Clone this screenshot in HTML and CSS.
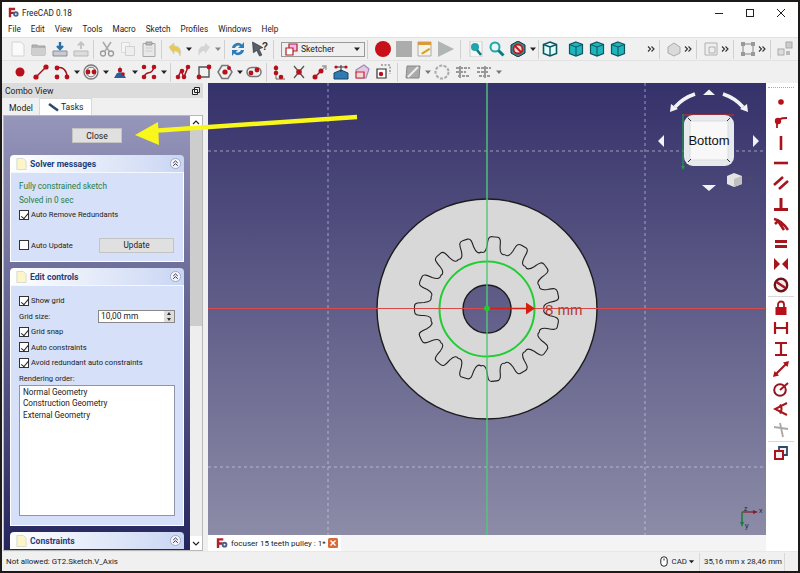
FILE: index.html
```html
<!DOCTYPE html>
<html lang="en">
<head>
  <meta charset="UTF-8">
  <title>FreeCAD 0.18</title>
  <link rel="stylesheet" href="styles.css">
</head>
<body>
  <svg class="defs" width="0" height="0">
    <defs>
      <symbol id="cube" viewBox="0 0 16 16"><path d="M8 1l6.500 2.500v9L8 15l-6.500-2.500v-9z" fill="#1fb5bd" stroke="#0e5560" stroke-width="1.200"/><path d="M1.500 3.500L8 6l6.500-2.500M8 6v9" fill="none" stroke="#0e5560"/></symbol>
      <symbol id="caret" viewBox="0 0 8 8"><path d="M1 2.500h6L4 6z" fill="#222"/></symbol>
      <symbol id="dbl" viewBox="0 0 8 8"><path d="M1 1.500L3.500 4 1 6.500M4.500 1.500L7 4 4.500 6.500" fill="none" stroke="#333" stroke-width="1.100"/></symbol>
      <symbol id="doc" viewBox="0 0 12 12"><path d="M1 0h7l3 3v9H1z" fill="#fdf6c8" stroke="#d8d8d0"/></symbol>
      <symbol id="fold" viewBox="0 0 12 12"><circle cx="6" cy="6" r="5.500" fill="#f4f6fc" stroke="#9aa6c4"/><path d="M3.500 5.500L6 3.200l2.500 2.300M3.500 8.500L6 6.200l2.500 2.300" fill="none" stroke="#223" stroke-width="1"/></symbol>
    </defs>
  </svg>

  <div class="window">
    <div class="titlebar">
      <svg class="app-icon" width="11" height="11" viewBox="0 0 14 14"><path d="M1 1h8v3H4v2h4v3H4v4H1z" fill="#b02028"/><circle cx="10" cy="9" r="3.500" fill="#4a5f8c"/><circle cx="10" cy="9" r="1.200" fill="#fff"/></svg>
      <span class="title">FreeCAD 0.18</span>
      <div class="win-btns">
        <svg width="10" height="10" viewBox="0 0 10 10"><path d="M1 5.500h8" stroke="#222"/></svg>
        <svg width="10" height="10" viewBox="0 0 10 10"><rect x="1.500" y="1.500" width="7" height="7" fill="none" stroke="#222"/></svg>
        <svg width="10" height="10" viewBox="0 0 10 10"><path d="M1 1l8 8M9 1l-8 8" stroke="#222"/></svg>
      </div>
    </div>

    <div class="menubar">
      <span>File</span><span>Edit</span><span>View</span><span>Tools</span><span>Macro</span><span>Sketch</span><span>Profiles</span><span>Windows</span><span>Help</span>
    </div>

    <div class="toolbar tb-main">
      <svg class="ic" viewBox="0 0 16 16"><path d="M2 1h9l3 3v11H2z" fill="#fafafa" stroke="#d4d4d4"/></svg>
      <svg class="ic" viewBox="0 0 16 16"><path d="M1 4h5l1 1h7v9H1z" fill="#b4b4b4" stroke="#a0a0a0"/><path d="M1 7h13v7H1z" fill="#cfcfcf"/></svg>
      <svg class="ic" viewBox="0 0 16 16"><path d="M1 10h14v5H1z" fill="#c8ccd2" stroke="#8a8f96"/><path d="M8 1v6M5 5l3 3 3-3" fill="none" stroke="#2a6fa8" stroke-width="2.400"/></svg>
      <svg class="ic" viewBox="0 0 16 16"><path d="M1 10h14v5H1z" fill="#dcdcdc" stroke="#b8b8b8"/><path d="M8 8V2M5 4.500L8 1.500l3 3" fill="none" stroke="#c4c4c4" stroke-width="2"/></svg>
      <i class="sep"></i>
      <svg class="ic" viewBox="0 0 16 16"><path d="M4 1l6 9M12 1L6 10" stroke="#a8a8a8" stroke-width="1.500"/><circle cx="4" cy="12.500" r="2.500" fill="none" stroke="#9a9a9a" stroke-width="1.300"/><circle cx="12" cy="12.500" r="2.500" fill="none" stroke="#9a9a9a" stroke-width="1.300"/></svg>
      <svg class="ic" viewBox="0 0 16 16"><path d="M1.500 1.500h8v10h-8z" fill="#f4f4f4" stroke="#dadada"/><path d="M5.500 5.500h9v9h-9z" fill="#eee" stroke="#d0d0d0"/></svg>
      <svg class="ic" viewBox="0 0 16 16"><path d="M2 2.500h12v13H2z" fill="#e8e8e8" stroke="#a8a8a8"/><path d="M5 1h6v3H5z" fill="#bbb" stroke="#999"/><path d="M4.500 7h7M4.500 10h7" stroke="#ccc"/></svg>
      <i class="sep"></i>
      <svg class="ic" viewBox="0 0 16 16"><path d="M2 6l5-4v3c5 0 8 3 6 10-1-4-3-5-6-5v3z" fill="#e9c94e" stroke="#c8c8c8" stroke-width=".6"/></svg>
      <svg class="arr" viewBox="0 0 8 8"><use href="#caret"/></svg>
      <svg class="ic" viewBox="0 0 16 16"><path d="M14 6L9 2v3C4 5 1 8 3 15c1-4 3-5 6-5v3z" fill="#d4d4d4"/></svg>
      <svg class="arr" viewBox="0 0 8 8"><path d="M1 2.500h6L4 6z" fill="#888"/></svg>
      <i class="sep"></i>
      <svg class="ic" viewBox="0 0 16 16"><path d="M2 7a6 6 0 0 1 10-3.500L14 1v6H8l2.200-2A3.500 3.500 0 0 0 5 7z" fill="#2d7db8"/><path d="M14 9a6 6 0 0 1-10 3.500L2 15V9h6l-2.200 2A3.500 3.500 0 0 0 11 9z" fill="#2d7db8"/></svg>
      <svg class="ic ic-help" viewBox="0 0 18 17"><path d="M1 1l11 6-4 1.500L11 15l-2.500 1-3-6L2 12.500z" fill="#56606a" stroke="#222" stroke-width=".6"/><text x="11" y="10" class="help-mark">?</text></svg>
      <i class="sep"></i>
      <div class="wb-combo">
        <svg width="13" height="13" viewBox="0 0 13 13"><path d="M4 1h8v7H4z" fill="#fbe" stroke="#b02028" stroke-width="1.200"/><path d="M1 5h7v7H1z" fill="#fff" stroke="#b02028" stroke-width="1.200"/></svg>
        <span>Sketcher</span>
        <svg class="wb-caret" width="8" height="8" viewBox="0 0 8 8"><use href="#caret"/></svg>
      </div>
      <i class="sep"></i>
      <svg class="ic ic-rec" viewBox="0 0 16 16"><circle cx="8" cy="8" r="8" fill="#c8101a"/></svg>
      <svg class="ic" viewBox="0 0 16 16"><rect width="16" height="16" fill="#acacac"/></svg>
      <svg class="ic" viewBox="0 0 16 16"><path d="M1 1h13v14H1z" fill="#f6f4e8" stroke="#aaa"/><path d="M1 1h13v3H1z" fill="#d89a3a"/><path d="M4 12l8-5 1.500 1.500-8 5z" fill="#d8a020"/></svg>
      <svg class="ic" viewBox="0 0 16 16"><path d="M0 0l16 8-16 8z" fill="#b0b6b6"/></svg>
      <i class="sep sep-wide"></i>
      <svg class="ic" viewBox="0 0 16 16"><path d="M2 0h12v16H2z" fill="#f6f6f6" stroke="#ccc"/><circle cx="7" cy="6" r="4" fill="#1fa5ad"/><path d="M9 9l4 5" stroke="#0e7a80" stroke-width="2.500"/></svg>
      <svg class="ic" viewBox="0 0 16 16"><circle cx="6" cy="6" r="4.500" fill="#e8f8f8" stroke="#1fa5ad" stroke-width="2"/><path d="M9.500 9.500l5 5" stroke="#0e7a80" stroke-width="3"/></svg>
      <svg class="ic" viewBox="0 0 16 16"><path d="M8 0l7 4v8l-7 4-7-4V4z" fill="#3a8a92" stroke="#134"/><circle cx="8" cy="8" r="4.500" fill="#ddd" stroke="#c01818" stroke-width="1.800"/><path d="M5 5l6 6" stroke="#c01818" stroke-width="1.800"/></svg>
      <svg class="arr" viewBox="0 0 8 8"><use href="#caret"/></svg>
      <i class="sep sep-tight"></i>
      <svg class="ic" viewBox="0 0 16 16"><path d="M8 1l6.500 2.500v9L8 15l-6.500-2.500v-9z" fill="#dff" stroke="#0e5560" stroke-width="1.600"/><path d="M1.500 3.500L8 6l6.500-2.500M8 6v9" fill="none" stroke="#0e5560" stroke-width="1.400"/></svg>
      <svg class="ic ic-gap" viewBox="0 0 16 16"><use href="#cube"/></svg>
      <svg class="ic" viewBox="0 0 16 16"><use href="#cube"/></svg>
      <svg class="ic" viewBox="0 0 16 16"><use href="#cube"/></svg>
      <svg class="more more-first" viewBox="0 0 8 8"><use href="#dbl"/></svg>
      <i class="sep sep-tool"></i>
      <svg class="ic" viewBox="0 0 16 16"><path d="M2 6l6-4 6 4v6l-6 3-6-3z" fill="#dadada" stroke="#aaa"/></svg>
      <svg class="more" viewBox="0 0 8 8"><use href="#dbl"/></svg>
      <i class="sep sep-tool"></i>
      <svg class="ic" viewBox="0 0 16 16"><path d="M2 2h12v12H2z" fill="#eee" stroke="#b0b0b0"/><path d="M6 6h6v6H6z" fill="none" stroke="#b0b0b0"/></svg>
      <svg class="more" viewBox="0 0 8 8"><use href="#dbl"/></svg>
      <i class="sep sep-tool"></i>
      <svg class="ic" viewBox="0 0 16 16"><path d="M3 3h10v10H3z" fill="none" stroke="#bbb" stroke-width="2"/><rect x="1" y="1" width="4" height="4" fill="#999"/><rect x="11" y="1" width="4" height="4" fill="#999"/><rect x="1" y="11" width="4" height="4" fill="#999"/><rect x="11" y="11" width="4" height="4" fill="#999"/></svg>
      <svg class="more" viewBox="0 0 8 8"><use href="#dbl"/></svg>
      <i class="sep sep-tool"></i>
      <svg class="ic" viewBox="0 0 16 16"><rect x="9" y="1" width="6" height="6" fill="#ccc" stroke="#aaa"/><rect x="1" y="8" width="6" height="6" fill="#ddd" stroke="#aaa"/><rect x="9" y="10" width="4" height="4" fill="#bbb"/></svg>
    </div>

    <div class="toolbar tb-sketch">
      <svg class="ic ic-point" viewBox="0 0 16 16"><circle class="dot" cx="8" cy="8" r="4.500"/></svg>
      <svg class="ic" viewBox="0 0 16 16"><path class="ln" d="M3 13L13 3"/><circle class="dot" cx="3" cy="13" r="2.600"/><circle class="dot" cx="13" cy="3" r="2.600"/></svg>
      <svg class="ic" viewBox="0 0 16 16"><path class="ln" d="M3 4c6-2 10 3 10 9"/><circle class="dot" cx="3" cy="4" r="2.400"/><circle class="dot" cx="3" cy="13" r="2.400"/><circle class="dot" cx="13" cy="13" r="2.400"/></svg>
      <svg class="arr" viewBox="0 0 8 8"><use href="#caret"/></svg>
      <svg class="ic" viewBox="0 0 16 16"><circle cx="8" cy="8" r="7" fill="none" stroke="#777" stroke-width="1.300"/><circle cx="8" cy="8" r="4.800" fill="none" stroke="#777"/><circle class="dot" cx="5" cy="8" r="2.400"/><circle class="dot" cx="11" cy="8" r="2.400"/></svg>
      <svg class="arr" viewBox="0 0 8 8"><use href="#caret"/></svg>
      <svg class="ic" viewBox="0 0 16 16"><path d="M2 14h12l-3-5H5z" fill="#2a5f9c"/><path d="M6 9l2-7 2 7z" fill="#6a88b0"/><circle class="dot" cx="8" cy="6" r="2.200"/><circle class="dot" cx="11" cy="10" r="1.800"/></svg>
      <svg class="arr" viewBox="0 0 8 8"><use href="#caret"/></svg>
      <svg class="ic" viewBox="0 0 16 16"><path class="ln" d="M3 13c3-8 7 0 10-10"/><circle class="dot" cx="3" cy="3" r="2.300"/><circle class="dot" cx="13" cy="3" r="2.300"/><circle class="dot" cx="3" cy="13" r="2.300"/><circle class="dot" cx="13" cy="13" r="2.300"/></svg>
      <svg class="arr" viewBox="0 0 8 8"><use href="#caret"/></svg>
      <i class="sep"></i>
      <svg class="ic" viewBox="0 0 16 16"><path class="ln" d="M3 13l3-6 3 6 4-10"/><circle class="dot" cx="3" cy="13" r="2.300"/><circle class="dot" cx="7" cy="7" r="2.300"/><circle class="dot" cx="9" cy="13" r="2.300"/><circle class="dot" cx="13" cy="3" r="2.300"/></svg>
      <svg class="ic" viewBox="0 0 16 16"><path d="M3 3h10v10H3z" fill="none" stroke="#555" stroke-width="1.400"/><circle class="dot" cx="13" cy="3" r="2.400"/><circle class="dot" cx="3" cy="13" r="2.400"/></svg>
      <svg class="ic" viewBox="0 0 16 16"><path d="M5 1.500h6L15 8l-4 6.500H5L1 8z" fill="none" stroke="#777" stroke-width="1.500"/><circle class="dot" cx="8" cy="8" r="2.600"/><circle class="dot" cx="12" cy="4" r="2"/></svg>
      <svg class="arr" viewBox="0 0 8 8"><use href="#caret"/></svg>
      <svg class="ic" viewBox="0 0 16 16"><rect x="1" y="3.500" width="14" height="9" rx="4.500" fill="none" stroke="#777" stroke-width="1.500"/><circle class="dot" cx="5" cy="9" r="2.400"/><circle class="dot" cx="11" cy="6" r="2.400"/></svg>
      <i class="sep sep-tight"></i>
      <svg class="ic" viewBox="0 0 16 16"><path d="M6 1v14h9" fill="none" stroke="#666"/><circle class="dot" cx="6" cy="4" r="2.300"/><circle class="dot" cx="6" cy="9" r="2.300"/><circle class="dot" cx="11" cy="13" r="2.300"/></svg>
      <svg class="ic" viewBox="0 0 16 16"><path d="M3 2l10 12M13 2L3 14" stroke="#555" stroke-width="1.300"/><circle class="dot" cx="8" cy="8" r="2.800"/></svg>
      <svg class="ic" viewBox="0 0 16 16"><path class="ln" d="M3 13l6-6"/><path d="M9 7l5-5M10 2h4v4" fill="none" stroke="#999" stroke-width="1.300"/><circle class="dot" cx="3" cy="13" r="2.500"/><circle class="dot" cx="9" cy="7" r="2.500"/></svg>
      <svg class="ic" viewBox="0 0 16 16"><path d="M1 9l7-3 7 3v6H1z" fill="#2f7ab0" stroke="#17466e"/><path d="M8 1v7M3 3h10" stroke="#333"/><circle class="dot" cx="3" cy="3" r="1.600"/><circle class="dot" cx="13" cy="3" r="1.600"/></svg>
      <svg class="ic" viewBox="0 0 16 16"><path d="M2 6l8-5 5 4-3 9H3z" fill="#e8c8e0" stroke="#9a8ab8" stroke-width="1.200"/><path d="M2 8h8v6H2z" fill="#f4d8d8" stroke="#c02830" stroke-width="1.200"/></svg>
      <svg class="ic" viewBox="0 0 16 16"><path d="M6 1h9v9" fill="none" stroke="#666" stroke-dasharray="2 1.500"/><path d="M2 5h9v9H2z" fill="#fff" stroke="#333" stroke-width="1.200"/><circle class="dot" cx="6" cy="10" r="2.200"/></svg>
      <i class="sep sep-wide"></i>
      <svg class="ic" viewBox="0 0 16 16"><path d="M2 2h13l-1 12H1z" fill="#aaa" stroke="#888"/><path d="M3 13L13 3" stroke="#eee" stroke-width="2"/></svg>
      <svg class="arr" viewBox="0 0 8 8"><path d="M1 2.500h6L4 6z" fill="#777"/></svg>
      <svg class="ic" viewBox="0 0 16 16"><circle cx="8" cy="8" r="6.500" fill="none" stroke="#aaa" stroke-width="2" stroke-dasharray="3 1.500"/></svg>
      <svg class="ic" viewBox="0 0 16 16"><path d="M1 4h14M1 8h10M3 12h11" stroke="#999" stroke-width="2.200" stroke-dasharray="3 1"/><path d="M5 2v12" stroke="#999" stroke-width="2"/></svg>
      <svg class="ic" viewBox="0 0 16 16"><path d="M1 4h14M1 8h12M3 12h11" stroke="#999" stroke-width="2.200" stroke-dasharray="3 1"/><path d="M9 2v12" stroke="#999" stroke-width="2"/></svg>
      <svg class="arr" viewBox="0 0 8 8"><path d="M1 2.500h6L4 6z" fill="#777"/></svg>
    </div>

    <div class="main">
      <div class="dock">
        <div class="dock-title">
          <span>Combo View</span>
          <svg width="8" height="8" viewBox="0 0 8 8"><path d="M2.500.5h5v5h-5zM.5 2.500h5v5h-5z" fill="#f0f0f0" stroke="#222"/></svg>
        </div>
        <div class="tabs">
          <span class="tab">Model</span>
          <span class="tab tab-on">
            <svg width="11" height="9" viewBox="0 0 11 9"><path d="M1 1l9 6.500" stroke="#2a4a6a" stroke-width="2.600"/></svg>
            Tasks
          </span>
        </div>
        <div class="pane">
          <div class="tasks">
            <button class="btn btn-close">Close</button>

            <section class="box box-solver">
              <header class="box-head">
                <svg width="11" height="12"><use href="#doc"/></svg>
                <span>Solver messages</span>
                <svg class="fold" width="11" height="11"><use href="#fold"/></svg>
              </header>
              <div class="box-body">
                <p class="msg">Fully constrained sketch</p>
                <p class="msg">Solved in 0 sec</p>
                <label class="row"><i class="chk on"></i>Auto Remove Redundants</label>
                <div class="row row-update">
                  <label class="row"><i class="chk"></i>Auto Update</label>
                  <button class="btn btn-update">Update</button>
                </div>
              </div>
            </section>

            <section class="box box-edit">
              <header class="box-head">
                <svg width="11" height="12"><use href="#doc"/></svg>
                <span>Edit controls</span>
                <svg class="fold" width="11" height="11"><use href="#fold"/></svg>
              </header>
              <div class="box-body">
                <label class="row"><i class="chk on"></i>Show grid</label>
                <div class="row row-size">
                  <span>Grid size:</span>
                  <div class="spin"><span>10,00 mm</span><b class="spin-arrows"></b></div>
                </div>
                <label class="row"><i class="chk on"></i>Grid snap</label>
                <label class="row"><i class="chk on"></i>Auto constraints</label>
                <label class="row"><i class="chk on"></i>Avoid redundant auto constraints</label>
                <div class="row-label">Rendering order:</div>
                <ul class="order">
                  <li>Normal Geometry</li>
                  <li>Construction Geometry</li>
                  <li>External Geometry</li>
                </ul>
              </div>
            </section>

            <section class="box box-con">
              <header class="box-head">
                <svg width="11" height="12"><use href="#doc"/></svg>
                <span>Constraints</span>
                <svg class="fold" width="11" height="11"><use href="#fold"/></svg>
              </header>
            </section>
          </div>
          <div class="scroll">
            <svg class="scroll-btn" width="12" height="14" viewBox="0 0 12 14"><path d="M3 8l3-3 3 3" fill="none" stroke="#222" stroke-width="1.200"/></svg>
            <div class="scroll-thumb"></div>
            <div class="scroll-rest"></div>
            <svg class="scroll-btn" width="12" height="14" viewBox="0 0 12 14"><path d="M3 6l3 3 3-3" fill="none" stroke="#222" stroke-width="1.200"/></svg>
          </div>
        </div>
      </div>

      <div class="center">
        <div class="viewport">
          <svg class="scene" viewBox="208 83 557 452" width="557" height="452">
            <path class="grid" d="M328 83V535M645 83V535M208 151H765M208 467H765"/>
            <path fill="#d8d8d8" stroke="#1c1c1c" stroke-width="1.400" fill-rule="evenodd" d="M377 309a110 110 0 1 0 220 0a110 110 0 1 0-220 0zM463 309a24 24 0 1 0 48 0a24 24 0 1 0-48 0z"/>
            <defs>
              <path id="tooth" fill="none" stroke="#222" stroke-width="1.100" d="M-12-56C-9-55-7-57-6.500-63C-6.500-70-6-72.500-2-72.500L3-72.500C6.500-72.500 6.500-68 6.500-63C7-57 9-55 12-56"/>
            </defs>
            <g transform="translate(487 309)">
              <use href="#tooth" transform="rotate(6)"/><use href="#tooth" transform="rotate(30)"/><use href="#tooth" transform="rotate(54)"/>
              <use href="#tooth" transform="rotate(78)"/><use href="#tooth" transform="rotate(102)"/><use href="#tooth" transform="rotate(126)"/>
              <use href="#tooth" transform="rotate(150)"/><use href="#tooth" transform="rotate(174)"/><use href="#tooth" transform="rotate(198)"/>
              <use href="#tooth" transform="rotate(222)"/><use href="#tooth" transform="rotate(246)"/><use href="#tooth" transform="rotate(270)"/>
              <use href="#tooth" transform="rotate(294)"/><use href="#tooth" transform="rotate(318)"/><use href="#tooth" transform="rotate(342)"/>
              <circle r="47.500" fill="none" stroke="#22cc33" stroke-width="2"/>
            </g>
            <path d="M487 83V535" stroke="#52c878" stroke-width="1.400"/>
            <path d="M208 308.500H765" stroke="#d84a4a" stroke-width="1"/>
            <path d="M487 308.500H528" stroke="#d42010" stroke-width="1.500"/>
            <path d="M526 302.500l9 6-9 6z" fill="#d42010"/>
            <circle cx="487" cy="308.500" r="2.800" fill="#22cc33"/>
            <text class="dim" x="545" y="315">8 mm</text>

            <g class="cube-nav">
              <path class="nav-arc" d="M695 94Q683 98 675 107M723 94Q735 98 743 107"/>
              <path class="nav-w" d="M670 112l1-8 7 5zM748 112l-1-8-7 5z"/>
              <path class="nav-w" d="M703 95l6-5.500 6 5.500zM702 185l7 6 7-6zM664 135v12l-6-6zM753 135v12l6-6z"/>
              <path d="M684 115h50" fill="none" stroke="#b03030" stroke-width="1.400"/>
              <rect x="684" y="115" width="50" height="51" rx="9" fill="#e6eaec"/>
              <rect x="690" y="121" width="38" height="39" fill="#f8f8f8" stroke="#dcdcdc"/>
              <path d="M688 118l3 3M730 118l-3 3M688 162l3-3M730 162l-3-3" stroke="#333"/>
              <path d="M683 114v53" stroke="#1f9a50" stroke-width="1.200"/>
              <path d="M681 166l2 4 2-4z" fill="#1f9a50"/>
              <text class="cube-label" x="709" y="145">Bottom</text>
              <path d="M727 176l7-3 8 3v8l-8 3-7-3z" fill="#e4e4e4"/>
              <path d="M734 179v8l8-3v-8z" fill="#c0c0c0"/>
              <path d="M746 177h8l-4 4z" fill="#4a4a60"/>
            </g>

            <g class="axis">
              <path d="M742 512h13" stroke="#8a1828" stroke-width="1.200"/>
              <path d="M753 510l5 2-5 2z" fill="#8a1828"/>
              <path d="M742 512v12" stroke="#1c7a40" stroke-width="1.500"/>
              <path d="M740 522l2 5 2-5z" fill="#1c7a40"/>
              <text x="744" y="511">z</text><text x="759" y="513">x</text><text x="745" y="528">y</text>
            </g>
          </svg>
        </div>
        <div class="doc-tabs">
          <div class="doc-tab">
            <svg width="13" height="12" viewBox="0 0 16 14"><path d="M1 1h8v3H4v2h4v3H4v4H1z" fill="#b02028"/><circle cx="10.500" cy="9" r="3.500" fill="#4a5f8c"/><circle cx="10.500" cy="9" r="1.200" fill="#fff"/></svg>
            <span>focuser 15 teeth pulley : 1*</span>
            <svg width="10" height="10" viewBox="0 0 10 10"><rect width="10" height="10" rx="1.500" fill="#d86a3a"/><path d="M2.500 2.500l5 5M7.500 2.500l-5 5" stroke="#fff" stroke-width="1.400"/></svg>
          </div>
        </div>
      </div>

      <div class="side-bar">
        <i class="grip"></i>
        <svg class="ic-v" viewBox="0 0 16 16"><circle class="dot" cx="8" cy="8" r="2.800"/></svg>
        <svg class="ic-v" viewBox="0 0 16 16"><path d="M4 14V9c0-3 3-5 10-5" fill="none" stroke="#a8141c" stroke-width="1.800"/><circle class="dot" cx="5" cy="7" r="3.200"/></svg>
        <svg class="ic-v" viewBox="0 0 16 16"><path d="M8 1v14" stroke="#a8141c" stroke-width="2.600"/></svg>
        <svg class="ic-v" viewBox="0 0 16 16"><path d="M1 8h14" stroke="#a8141c" stroke-width="2.600"/></svg>
        <svg class="ic-v" viewBox="0 0 16 16"><path d="M1 10l9-8M6 14l9-8" stroke="#a8141c" stroke-width="2.600"/></svg>
        <svg class="ic-v" viewBox="0 0 16 16"><path d="M8 2v10M1 13.500h14" stroke="#a8141c" stroke-width="3"/></svg>
        <svg class="ic-v" viewBox="0 0 16 16"><path d="M1 3c6 1 10 5 14 11M2 8l3-3 6 9" fill="none" stroke="#a8141c" stroke-width="2.600"/></svg>
        <svg class="ic-v" viewBox="0 0 16 16"><path d="M2 5.500h12M2 10.500h12" stroke="#a8141c" stroke-width="3"/></svg>
        <svg class="ic-v" viewBox="0 0 16 16"><path d="M1 2l6 6-6 6zM15 2L9 8l6 6z" fill="#a8141c"/></svg>
        <svg class="ic-v" viewBox="0 0 16 16"><circle cx="8" cy="8" r="6.200" fill="#eee" stroke="#701018" stroke-width="2.400"/><path d="M3.500 5l9 6" stroke="#a8141c" stroke-width="2.600"/></svg>
        <i class="v-sep"></i>
        <svg class="ic-v" viewBox="0 0 16 16"><path d="M5 7V4.500a3 3 0 0 1 6 0V7" fill="none" stroke="#a8141c" stroke-width="1.800"/><rect x="2.500" y="7" width="11" height="8" fill="#b8101a"/></svg>
        <svg class="ic-v" viewBox="0 0 16 16"><path d="M2 2v12M14 2v12M2 8h12" stroke="#a8141c" stroke-width="2.200"/></svg>
        <svg class="ic-v" viewBox="0 0 16 16"><path d="M2 2h12M2 14h12M8 2v12" stroke="#a8141c" stroke-width="2.200"/></svg>
        <svg class="ic-v" viewBox="0 0 16 16"><path d="M3 13L13 3" stroke="#a8141c" stroke-width="2.200"/><path d="M0 16l1.500-6 4.500 4.500zM16 0l-1.500 6L10 1.500z" fill="#a8141c"/></svg>
        <svg class="ic-v" viewBox="0 0 16 16"><circle cx="7" cy="9" r="5.800" fill="none" stroke="#8c1820" stroke-width="2"/><path d="M7 9l8-7" stroke="#a8141c" stroke-width="2"/></svg>
        <svg class="ic-v" viewBox="0 0 16 16"><path d="M14 2L2 8l12 6M7 3.500c2 3 2 6 0 9" fill="none" stroke="#a8141c" stroke-width="2"/></svg>
        <svg class="ic-v" viewBox="0 0 16 16"><path d="M1 5l14 2M7 1l3 14" stroke="#a8a8a8" stroke-width="1.800"/></svg>
        <i class="v-sep"></i>
        <svg class="ic-v" viewBox="0 0 16 16"><path d="M6 2h8v8H6z" fill="#f0f0f0" stroke="#2a4a6a" stroke-width="1.800"/><path d="M2 6h8v8H2z" fill="#f0f0f0" stroke="#a8141c" stroke-width="2"/></svg>
      </div>
    </div>

    <div class="statusbar">
      <span class="status-msg">Not allowed: GT2.Sketch.V_Axis</span>
      <svg width="8" height="11" viewBox="0 0 8 11"><rect x=".8" y=".8" width="6.400" height="9.400" rx="3" fill="#fff" stroke="#222"/><path d="M4 2.500v2" stroke="#222"/></svg>
      <span class="status-cad">CAD</span>
      <svg class="status-caret" width="7" height="7" viewBox="0 0 8 8"><use href="#caret"/></svg>
      <span class="status-dim">35,16 mm x 28,46 mm</span>
      <i class="status-grip"></i>
    </div>
  </div>

  <svg class="pointer" width="240" height="40" viewBox="130 110 240 40">
    <path d="M357 117L158 130.500" stroke="#f8f61a" stroke-width="4.500"/>
    <path d="M135 135l23-13 1 23z" fill="#f8f61a"/>
  </svg>
</body>
</html>
```

FILE: styles.css
```css
* {
  box-sizing: border-box;
}

html, body {
  margin: 0;
  height: 100%;
}

body {
  background: #1d1a17;
  font-family: Roboto, "Liberation Sans", sans-serif;
  font-size: 8.600px;
  color: #222;
  overflow: hidden;
  position: relative;
}

.defs {
  position: absolute;
}

.window {
  margin: 2px 2px 2px 2px;
  height: 569px;
  background: #f0f0f0;
  display: flex;
  flex-direction: column;
}

.titlebar {
  height: 19px;
  background: #fff;
  display: flex;
  align-items: center;
  padding: 2px 0 0 6px;
  flex: none;
}

.title {
  font-size: 8.200px;
  margin-left: 3px;
}

.win-btns {
  margin-left: auto;
  display: flex;
  gap: 21px;
  padding-right: 12px;
}

.menubar {
  height: 16px;
  background: #fff;
  display: flex;
  align-items: center;
  gap: 10px;
  padding-left: 6px;
  font-size: 8.200px;
  flex: none;
}

.toolbar {
  height: 23px;
  display: flex;
  align-items: center;
  flex: none;
  border-top: 1px solid #e2e2e2;
}

.tb-main {
  padding-left: 5px;
}

.tb-sketch {
  padding-left: 3px;
}

.ic {
  width: 16px;
  height: 16px;
  margin: 0 2.500px;
  flex: none;
}

.ic-help {
  width: 18px;
}

.help-mark {
  font: bold 11px "Liberation Sans", sans-serif;
  fill: #333;
}

.ic-rec {
  margin-left: 5px;
}

.ic-gap {
  margin-left: 7px;
}

.ic-point {
  margin-left: 7px;
}

.arr {
  width: 8px;
  height: 8px;
  flex: none;
}

.more {
  width: 8px;
  height: 8px;
  margin: 0 1px 0 0;
  flex: none;
}

.more-first {
  margin-left: 19px;
}

.sep {
  width: 1px;
  height: 19px;
  margin: 0 2px;
  background: #d0d0d0;
  flex: none;
}

.sep-wide {
  margin: 0 5px 0 3px;
}

.sep-tight {
  margin: 0 1px;
}

.sep-tool {
  margin: 0 3px;
}

.dot {
  fill: #b8101a;
}

.ln {
  stroke: #a0141c;
  stroke-width: 1.500;
  fill: none;
}

.wb-combo {
  width: 84px;
  height: 15px;
  margin-left: 5px;
  background: #efefef;
  border: 1px solid #999;
  display: flex;
  align-items: center;
  gap: 3px;
  padding: 0 3px;
  flex: none;
}

.wb-caret {
  margin-left: auto;
}

.main {
  height: 468px;
  display: flex;
  flex: none;
}

.dock {
  width: 201px;
  margin-right: 5px;
  display: flex;
  flex-direction: column;
  flex: none;
}

.dock-title {
  height: 15px;
  background: #dcdcdc;
  padding: 0 3px;
  display: flex;
  align-items: center;
  justify-content: space-between;
  flex: none;
}

.tabs {
  height: 17px;
  display: flex;
  align-items: flex-end;
  padding-left: 1px;
  flex: none;
}

.tab {
  height: 15px;
  padding: 0 6px;
  display: flex;
  align-items: center;
  gap: 2px;
}

.tab-on {
  height: 17px;
  padding: 0 8px;
  background: #fff;
  border: 1px solid #d8d8d8;
  border-bottom: none;
}

.pane {
  height: 436px;
  display: flex;
  border: 1px solid #b8b8b8;
  flex: none;
  margin-left: 1px;
}

.tasks {
  width: 187px;
  background: linear-gradient(#9696bb, #26265f);
  padding: 12px 6px 0 6px;
  display: flex;
  flex-direction: column;
  overflow: hidden;
}

.btn {
  font: inherit;
  background: #e0e0e0;
  border: 1px solid #c4c4c4;
  padding: 0;
  color: #222;
}

.btn-close {
  width: 50px;
  height: 15px;
  align-self: center;
  margin-bottom: 12px;
  flex: none;
}

.box {
  flex: none;
  margin-bottom: 6px;
  border-radius: 3px 3px 0 0;
}

.box-head {
  height: 17px;
  background: linear-gradient(90deg, #fff, #c9d6f3);
  border-radius: 4px 4px 0 0;
  display: flex;
  align-items: center;
  gap: 3px;
  padding: 0 3px 0 6px;
  font-weight: 700;
  color: #1f3f7a;
}

.fold {
  margin-left: auto;
}

.box-body {
  background: #d6e0f8;
  border: 1px solid #fff;
  border-top-color: #f4f7fe;
  padding: 0 8px;
}

.box-solver .box-body {
  height: 90px;
  padding-top: 6px;
}

.box-edit .box-body {
  height: 241px;
  padding-top: 7px;
}

.box-con {
  margin: 0;
}

.msg {
  margin: 0;
  height: 14px;
  line-height: 14px;
  font-size: 8.200px;
  color: #1e7d42;
}

.row {
  display: flex;
  align-items: center;
  gap: 2px;
  height: 15.500px;
  font-size: 7.600px;
  white-space: nowrap;
}

.row-update {
  justify-content: space-between;
  margin-top: 15px;
}

.btn-update {
  width: 75px;
  height: 15px;
  margin-right: 1px;
  font-size: 8.200px;
}

.row-size {
  justify-content: space-between;
}

.spin {
  width: 77px;
  height: 13px;
  background: #fff;
  border: 1px solid #888;
  display: flex;
  align-items: center;
  justify-content: space-between;
  padding-left: 2px;
  font-size: 8.400px;
}

.spin-arrows {
  width: 10px;
  height: 11px;
  background: #ddd;
  position: relative;
}

.spin-arrows::before {
  content: "";
  position: absolute;
  left: 3px;
  top: 1px;
  border: 2px solid transparent;
  border-bottom: 3px solid #333;
  border-top: 0;
}

.spin-arrows::after {
  content: "";
  position: absolute;
  left: 3px;
  bottom: 1px;
  border: 2px solid transparent;
  border-top: 3px solid #333;
  border-bottom: 0;
}

.chk {
  width: 10px;
  height: 10px;
  background: #fff;
  border: 1px solid #333;
  position: relative;
  flex: none;
}

.chk.on::after {
  content: "";
  position: absolute;
  left: 2.500px;
  top: 0;
  width: 3px;
  height: 7px;
  border: solid #222;
  border-width: 0 1px 1px 0;
  transform: rotate(40deg);
}

.row-label {
  margin-top: 1px;
  height: 13px;
  line-height: 13px;
  font-size: 7.600px;
}

.order {
  list-style: none;
  margin: 0;
  padding: 1px 3px;
  height: 131px;
  background: #fff;
  border: 1px solid #8c96a8;
  font-size: 8.200px;
  line-height: 11.500px;
}

.scroll {
  width: 12px;
  background: #f0f0f0;
  display: flex;
  flex-direction: column;
}

.scroll-btn {
  flex: none;
  background: #fff;
}

.scroll-thumb {
  height: 196px;
  background: #cdcdcd;
}

.scroll-rest {
  flex: 1;
  background: #eee;
}

.center {
  width: 558px;
  display: flex;
  flex-direction: column;
  flex: none;
}

.viewport {
  height: 452px;
  background: linear-gradient(#35316a, #8c8ca8);
  position: relative;
  flex: none;
}

.scene {
  position: absolute;
  left: 0;
  top: 0;
}

.grid {
  stroke: #dcdce8;
  stroke-width: 1;
  stroke-dasharray: 3 3;
  fill: none;
  opacity: .6;
}

.dim {
  font: 15px "Liberation Sans", sans-serif;
  fill: #b23a30;
}

.nav-w {
  fill: #f2f2f6;
}

.nav-arc {
  fill: none;
  stroke: #f2f2f6;
  stroke-width: 3.500;
}

.cube-label {
  font: 13px "Liberation Sans", sans-serif;
  fill: #111;
  text-anchor: middle;
}

.axis text {
  font: 7px "Liberation Sans", sans-serif;
  fill: #222;
}

.doc-tabs {
  height: 16px;
  background: #f4f4f4;
  flex: none;
}

.doc-tab {
  width: 133px;
  height: 16px;
  background: #fff;
  display: flex;
  align-items: center;
  gap: 2px;
  padding-left: 8px;
  font-size: 8px;
  white-space: nowrap;
}

.side-bar {
  flex: 1;
  background: #fff;
  display: flex;
  flex-direction: column;
  align-items: center;
  padding: 4px 3px 0 0;
}

.grip {
  width: 26px;
  height: 5px;
  border-top: 1px dotted #aaa;
}

.ic-v {
  width: 16px;
  height: 16px;
  margin: 2.150px 0;
  flex: none;
}

.v-sep {
  width: 26px;
  height: 1px;
  margin: 1px 0;
  background: #d8d8d8;
  flex: none;
}

.statusbar {
  height: 20px;
  display: flex;
  align-items: center;
  padding-left: 4px;
  font-size: 7.900px;
  flex: none;
  border-top: 1px solid #e8e8e8;
}

.status-msg {
  margin-right: auto;
}

.status-cad {
  margin-left: 4px;
}

.status-caret {
  margin: 0 4px 0 1px;
}

.status-dim {
  border-left: 1px solid #d8d8d8;
  padding-left: 4px;
  height: 18px;
  line-height: 18px;
}

.status-grip {
  width: 14px;
  height: 18px;
  margin-left: 2px;
  border-left: 1px solid #d8d8d8;
}

.pointer {
  position: absolute;
  left: 130px;
  top: 110px;
}
```
